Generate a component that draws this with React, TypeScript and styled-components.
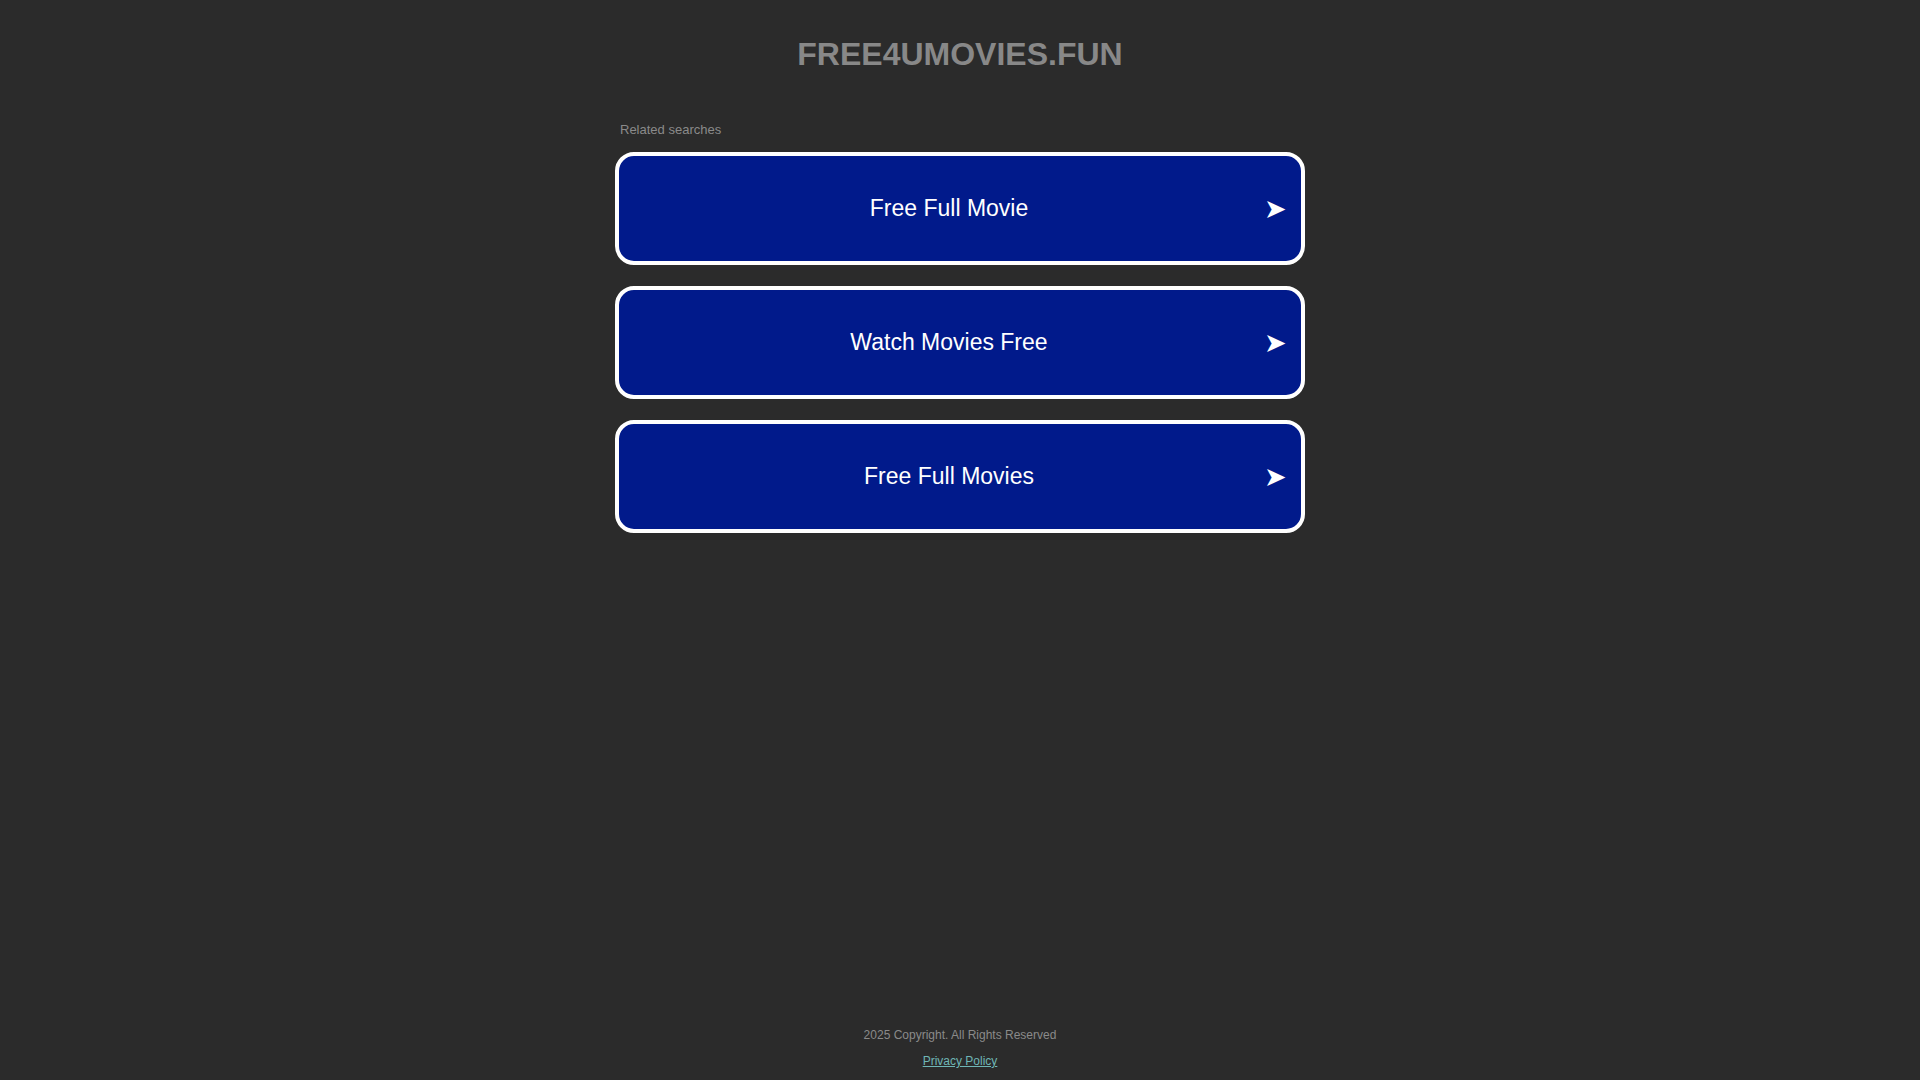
import React from "react";
import styled, { createGlobalStyle } from "styled-components";

const Global = createGlobalStyle`
  html, body { margin: 0; padding: 0; background: #2b2b2b; }
  body { font-family: "Liberation Sans", Arial, sans-serif; }
`;

const Page = styled.div`
  min-height: 100vh;
  display: flex;
  flex-direction: column;
  align-items: center;
  box-sizing: border-box;
`;

const Title = styled.h1`
  margin: 0;
  padding-top: 35px;
  font-size: 32px;
  line-height: 38px;
  font-weight: bold;
  color: #888888;
  text-align: center;
`;

const Main = styled.div`
  width: 690px;
  margin-top: 49px;
  display: flex;
  flex-direction: column;
`;

const Label = styled.div`
  font-size: 13px;
  color: #8a8a8a;
  padding-left: 5px;
  margin-bottom: 15px;
`;

const List = styled.div`
  display: flex;
  flex-direction: column;
  gap: 21px;
`;

const Item = styled.a`
  position: relative;
  display: flex;
  align-items: center;
  justify-content: center;
  height: 113px;
  box-sizing: border-box;
  background: #011a8b;
  border: 4px solid #ffffff;
  border-radius: 19px;
  color: #ffffff;
  font-size: 23px;
  text-decoration: none;
  padding-right: 22px;
`;

const Arrow = styled.span`
  position: absolute;
  right: 14px;
  top: 50%;
  transform: translateY(-50%);
  font-size: 27px;
  color: #ffffff;
`;

const Footer = styled.div`
  margin-top: auto;
  padding-bottom: 12px;
  display: flex;
  flex-direction: column;
  align-items: center;
  gap: 12px;
  font-size: 12px;
  color: #8a8a8a;
`;

const Link = styled.a`
  color: #6fb6b6;
  text-decoration: underline;
`;

const items = ["Free Full Movie", "Watch Movies Free", "Free Full Movies"];

export default function App() {
  return (
    <Page>
      <Global />
      <Title>FREE4UMOVIES.FUN</Title>
      <Main>
        <Label>Related searches</Label>
        <List>
          {items.map((t) => (
            <Item key={t} href="#">
              {t}
              <Arrow>➤</Arrow>
            </Item>
          ))}
        </List>
      </Main>
      <Footer>
        <div>2025 Copyright. All Rights Reserved</div>
        <Link href="#">Privacy Policy</Link>
      </Footer>
    </Page>
  );
}
